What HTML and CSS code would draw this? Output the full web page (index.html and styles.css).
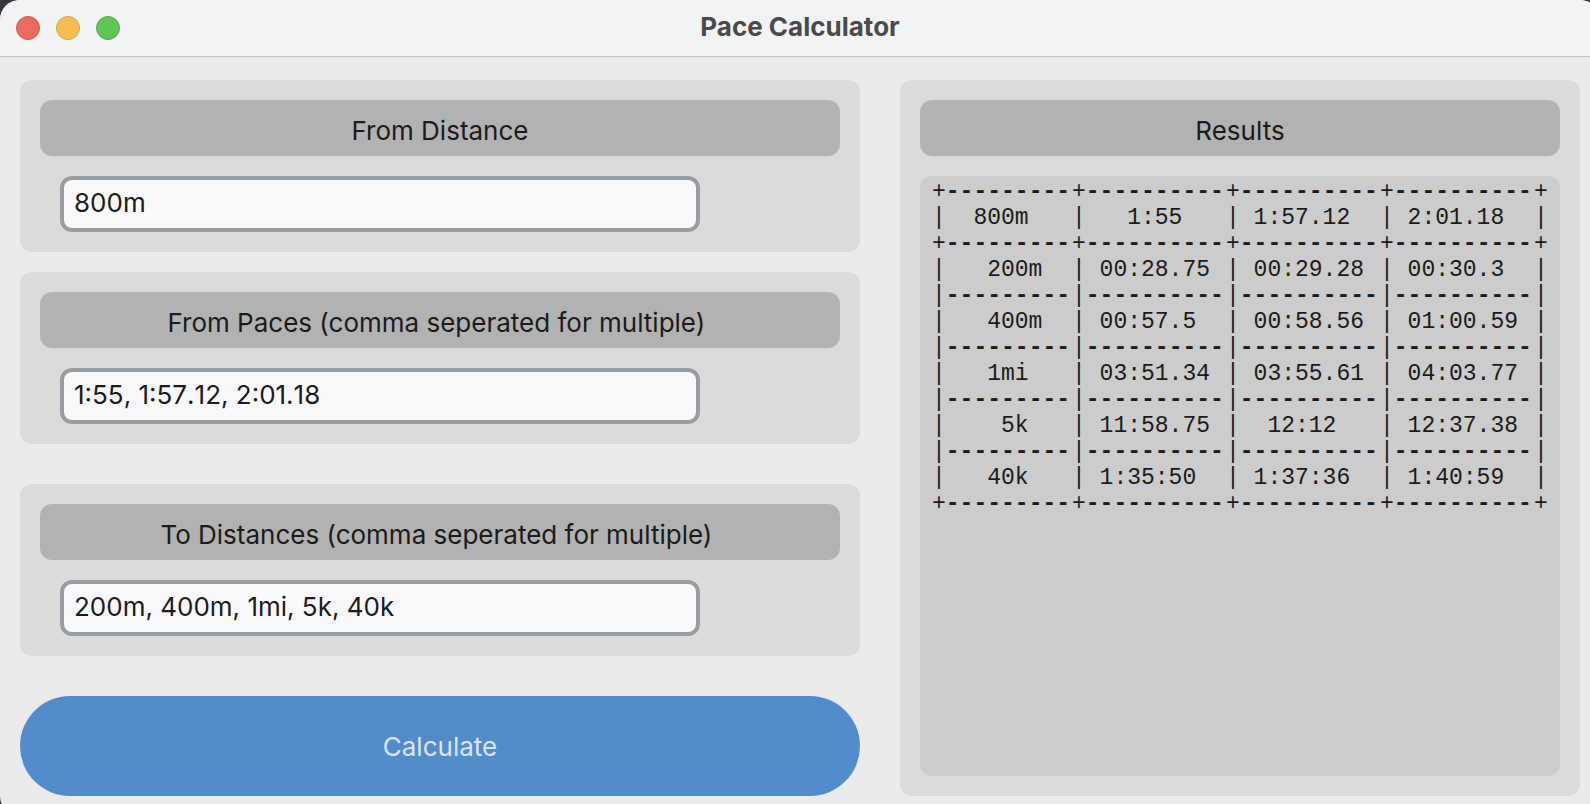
FILE: index.html
```html
<!DOCTYPE html>
<html lang="en">
<head>
<meta charset="utf-8">
<title>Pace Calculator</title>
<link rel="stylesheet" href="styles.css">
</head>
<body>
<div class="window">
  <header class="titlebar">
    <div class="lights">
      <button class="light light-close" type="button" aria-label="Close"></button>
      <button class="light light-minimize" type="button" aria-label="Minimize"></button>
      <button class="light light-zoom" type="button" aria-label="Zoom"></button>
    </div>
    <h1 class="title">Pace Calculator</h1>
  </header>
  <main class="content">
    <form class="form">
      <div class="panel">
        <label class="heading" for="from-distance">From Distance</label>
        <input class="entry" id="from-distance" type="text" value="800m">
      </div>
      <div class="panel">
        <label class="heading" for="from-paces">From Paces (comma seperated for multiple) </label>
        <input class="entry" id="from-paces" type="text" value="1:55, 1:57.12, 2:01.18">
      </div>
      <div class="panel panel-spaced">
        <label class="heading" for="to-distances">To Distances (comma seperated for multiple) </label>
        <input class="entry" id="to-distances" type="text" value="200m, 400m, 1mi, 5k, 40k">
      </div>
      <button class="calculate" type="button">Calculate</button>
    </form>
    <section class="panel results">
      <h2 class="heading">Results</h2>
      <div class="output">
        <table class="paces">
          <colgroup><col class="col-distance"><col class="col-pace"><col class="col-pace"><col class="col-pace"><col class="col-end"></colgroup>
          <tbody>
          <tr><td>+<b>---------</b></td><td>+<b>----------</b></td><td>+<b>----------</b></td><td>+<b>----------</b></td><td>+</td></tr>
          <tr><td>|  800m</td><td>|   1:55</td><td>| 1:57.12</td><td>| 2:01.18</td><td>|</td></tr>
          <tr><td>+<b>---------</b></td><td>+<b>----------</b></td><td>+<b>----------</b></td><td>+<b>----------</b></td><td>+</td></tr>
          <tr><td>|   200m</td><td>| 00:28.75</td><td>| 00:29.28</td><td>| 00:30.3</td><td>|</td></tr>
          <tr><td>|<b>---------</b></td><td>|<b>----------</b></td><td>|<b>----------</b></td><td>|<b>----------</b></td><td>|</td></tr>
          <tr><td>|   400m</td><td>| 00:57.5</td><td>| 00:58.56</td><td>| 01:00.59</td><td>|</td></tr>
          <tr><td>|<b>---------</b></td><td>|<b>----------</b></td><td>|<b>----------</b></td><td>|<b>----------</b></td><td>|</td></tr>
          <tr><td>|   1mi</td><td>| 03:51.34</td><td>| 03:55.61</td><td>| 04:03.77</td><td>|</td></tr>
          <tr><td>|<b>---------</b></td><td>|<b>----------</b></td><td>|<b>----------</b></td><td>|<b>----------</b></td><td>|</td></tr>
          <tr><td>|    5k</td><td>| 11:58.75</td><td>|  12:12</td><td>| 12:37.38</td><td>|</td></tr>
          <tr><td>|<b>---------</b></td><td>|<b>----------</b></td><td>|<b>----------</b></td><td>|<b>----------</b></td><td>|</td></tr>
          <tr><td>|   40k</td><td>| 1:35:50</td><td>| 1:37:36</td><td>| 1:40:59</td><td>|</td></tr>
          <tr><td>+<b>---------</b></td><td>+<b>----------</b></td><td>+<b>----------</b></td><td>+<b>----------</b></td><td>+</td></tr>
          </tbody>
        </table>
      </div>
    </section>
  </main>
</div>
</body>
</html>
```
FILE: styles.css
```css
* {
  box-sizing: border-box;
}

body {
  margin: 0;
  overflow: hidden;
  background: #36373b;
  color: #1b1b1b;
  font-family: Inter, "Liberation Sans", sans-serif;
  font-size: 26px;
}

/* The window runs slightly past the right and bottom screen edges. */
.window {
  display: flex;
  flex-direction: column;
  min-height: calc(100vh + 12px);
  margin-right: -10px;
  border-radius: 20px;
  overflow: hidden;
  background: #ebebeb;
}

.titlebar {
  display: grid;
  grid-template-columns: 1fr auto 1fr;
  align-items: center;
  height: 57px;
  padding: 0 16px;
  border-bottom: 1px solid #c2c2c3;
  background: #f1f3f5;
}

.lights {
  display: flex;
  gap: 16px;
}

.light {
  width: 24px;
  height: 24px;
  padding: 0;
  border: 1px solid;
  border-radius: 50%;
}

.light-close {
  border-color: #d9564c;
  background: #ed6a5f;
}

.light-minimize {
  border-color: #d9a244;
  background: #f6be50;
}

.light-zoom {
  border-color: #52ac43;
  background: #61c555;
}

.title {
  margin: 0;
  padding-bottom: 2px;
  color: #4a4a4b;
  font-size: 26px;
  font-weight: 700;
  line-height: 32px;
}

.content {
  display: grid;
  grid-template-columns: 840fr 680fr;
  gap: 40px;
  flex: 1;
  padding: 23px 20px 20px;
}

.form {
  display: flex;
  flex-direction: column;
  gap: 20px;
}

.panel {
  display: flex;
  flex-direction: column;
  gap: 20px;
  padding: 20px;
  border-radius: 12px;
  background: #dbdbdb;
}

.panel-spaced {
  margin: 20px 0;
}

.heading {
  height: 56px;
  margin: 0;
  padding-top: 6px;
  border-radius: 12px;
  background: #b2b2b2;
  font-size: 26px;
  font-weight: 400;
  line-height: 50px;
  text-align: center;
  white-space: pre;
}

.entry {
  width: 80%;
  height: 56px;
  margin-left: 20px;
  padding: 0 10px 4px;
  border: 4px solid #979da2;
  border-radius: 12px;
  background: #f9f9fc;
  color: inherit;
  font: inherit;
  font-kerning: none;
}

.calculate {
  height: 100px;
  border: 0;
  border-radius: 50px;
  background: #528ccb;
  color: #dce4ee;
  font: inherit;
}

.output {
  flex: 1;
  padding: 3px 12px;
  border-radius: 12px;
  background: #cccccc;
}

.paces {
  width: 616px;
  table-layout: fixed;
  border-collapse: collapse;
  font-family: "Liberation Mono", monospace;
  font-size: 23px;
  line-height: 26px;
  white-space: pre;
}

.paces td {
  padding: 0;
}

.col-distance {
  width: 140px;
}

.col-pace {
  width: 154px;
}

.col-end {
  width: 14px;
}
```
